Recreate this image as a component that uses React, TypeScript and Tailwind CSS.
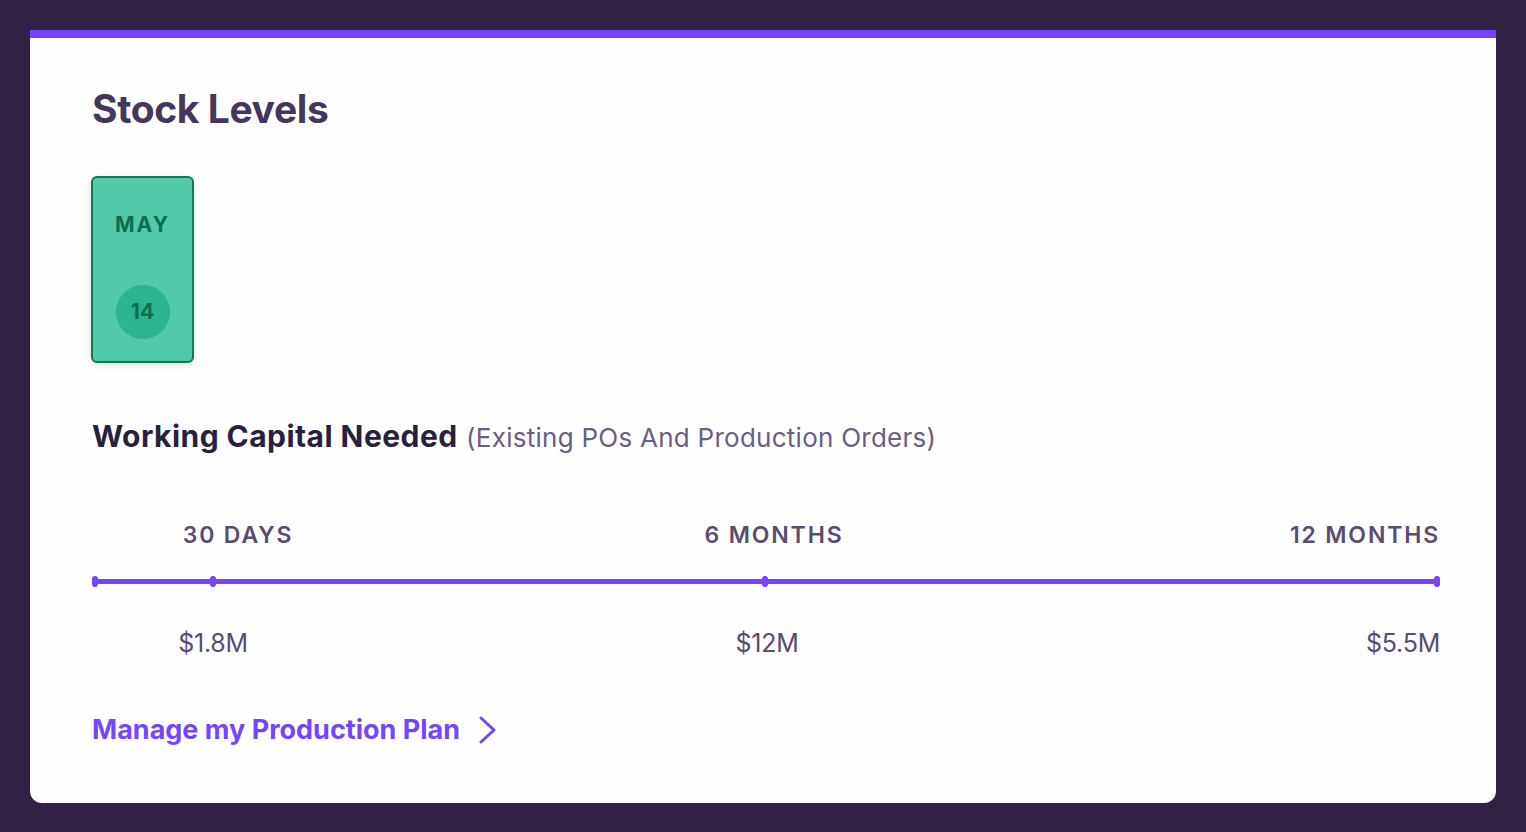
const font = { fontFamily: '"Inter", "Noto Sans", sans-serif' };

function DateCard() {
  return (
    <div className="flex h-[187px] w-[103px] flex-col items-center rounded-md border-2 border-[#0f7a58] bg-[#52c9a9] shadow-[0_2px_6px_rgba(0,0,0,0.12)]">
      <div className="mt-[36px] text-[21px] font-bold leading-none tracking-[0.1em] text-[#0d6e4f]">
        MAY
      </div>
      <div className="mt-[50px] flex h-[54px] w-[54px] items-center justify-center rounded-full bg-[#2bb48e] text-[21px] font-bold text-[#0d6e4f]">
        14
      </div>
    </div>
  );
}

function Timeline() {
  return (
    <div className="mt-[69px]">
      <div className="grid grid-cols-[292px_780px_1fr] text-[23px] font-semibold leading-none tracking-[0.08em] text-[#5a4c70]">
        <div className="text-center">30 DAYS</div>
        <div className="text-center">6 MONTHS</div>
        <div className="text-right">12 MONTHS</div>
      </div>
      <div className="relative mt-[29px] h-[10px]">
        <div className="absolute left-0 right-[2px] top-[3px] h-[5px] rounded-full bg-[#7544ff]" />
        <div className="absolute left-0 top-0 h-[11px] w-[6px] rounded-full bg-[#7544ff]" />
        <div className="absolute left-[118px] top-0 h-[11px] w-[6px] rounded-full bg-[#7544ff]" />
        <div className="absolute left-[670px] top-0 h-[11px] w-[6px] rounded-full bg-[#7544ff]" />
        <div className="absolute right-0 top-0 h-[11px] w-[6px] rounded-full bg-[#7544ff]" />
      </div>
      <div className="mt-[45px] grid grid-cols-[242px_866px_1fr] text-[25px] leading-none tracking-[-0.01em] text-[#5a4c70]">
        <div className="text-center">$1.8M</div>
        <div className="text-center">$12M</div>
        <div className="text-right">$5.5M</div>
      </div>
    </div>
  );
}

export default function App() {
  return (
    <div className="min-h-[832px] bg-[#312145] px-[30px] pt-[30px]" style={font}>
      <div className="overflow-hidden rounded-b-xl bg-[#fefefe]">
        <div className="h-[8px] bg-[#7544ff]" />
        <div className="pb-[52px] pl-[62px] pr-[56px] pt-[47px]">
          <h1 className="text-[39px] font-bold leading-[48px] tracking-[-0.01em] text-[#45365c]">Stock Levels</h1>
          <div className="mt-[43px] -ml-[1px]">
            <DateCard />
          </div>
          <div className="mt-[56px] text-[30px] leading-[34px]">
            <span className="font-bold tracking-[0.015em] text-[#2a1f3d]">Working Capital Needed</span>{" "}
            <span className="text-[26px] tracking-[0.01em] text-[#6b5e80]">(Existing POs And Production Orders)</span>
          </div>
          <Timeline />
          <a href="#" className="mt-[54px] flex items-center gap-[19px] text-[27px] font-bold text-[#7544ff]">
            Manage my Production Plan
            <svg width="17" height="28" viewBox="0 0 17 28" fill="none" stroke="currentColor" strokeWidth="3" strokeLinecap="round" strokeLinejoin="round">
              <polyline points="2,2 15,14 2,26" />
            </svg>
          </a>
        </div>
      </div>
    </div>
  );
}
